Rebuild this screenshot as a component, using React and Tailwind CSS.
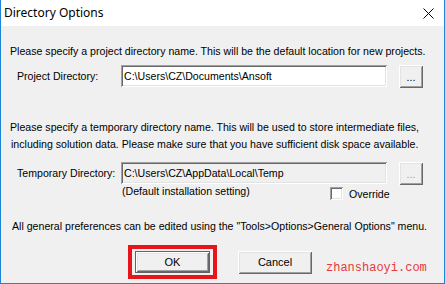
import React from 'react';

// classic win32 3D bevels
const raised = 'shadow-[inset_1px_1px_0_#ffffff,inset_-1px_-1px_0_#696969,inset_2px_2px_0_#e3e3e3,inset_-2px_-2px_0_#a0a0a0]';
const sunken = 'shadow-[inset_1px_1px_0_#a0a0a0,inset_-1px_-1px_0_#ffffff,inset_2px_2px_0_#696969,inset_-2px_-2px_0_#e3e3e3]';

function CloseIcon() {
  return (
    <svg width="11" height="11" viewBox="0 0 11 11" fill="none" stroke="#000" strokeWidth="1">
      <path d="M0.5 0.5 L10.5 10.5 M10.5 0.5 L0.5 10.5" />
    </svg>
  );
}

export default function App() {
  return (
    <div
      className="relative w-[445px] h-[284px] flex flex-col border-x border-b border-[#1c84d9] bg-[#f0f0f0] text-black overflow-hidden"
      style={{ fontFamily: '"Liberation Sans", Arial, sans-serif' }}
    >
      {/* title bar */}
      <div className="h-[26px] shrink-0 bg-white flex items-center justify-between pl-[3px] pr-[10px]">
        <span className="text-[12px] leading-[16px]" style={{ fontFamily: '"Noto Sans", sans-serif' }}>
          Directory Options
        </span>
        <CloseIcon />
      </div>

      <div className="flex flex-col text-[10.6px] whitespace-nowrap">
        <p className="mt-[18px] ml-[9px] leading-[14px]">
          Please specify a project directory name. This will be the default location for new projects.
        </p>

        <div className="mt-[7px] flex items-start">
          <span className="shrink-0 w-[120px] pl-[16px] leading-[22px]">Project Directory:</span>
          <div className={`shrink-0 w-[266px] h-[22px] bg-white ${sunken} pl-[3px] leading-[22px]`}>
            C:\Users\CZ\Documents\Ansoft
          </div>
          <button className={`shrink-0 ml-[12px] w-[24px] h-[23px] bg-[#f0f0f0] ${raised} leading-[20px]`}>...</button>
        </div>

        <p className="mt-[31px] ml-[9px] leading-[17px]">
          Please specify a temporary directory name. This will be used to store intermediate files,
          <br />
          <span className="ml-[1px]">including solution data. Please make sure that you have sufficient disk space available.</span>
        </p>

        <div className="mt-[9px] flex items-start">
          <span className="shrink-0 w-[120px] pl-[16px] leading-[22px]">Temporary Directory:</span>
          <div className={`shrink-0 w-[266px] h-[22px] bg-[#f0f0f0] ${sunken} pl-[3px] leading-[22px]`}>
            C:\Users\CZ\AppData\Local\Temp
          </div>
          <button className={`shrink-0 ml-[12px] w-[24px] h-[23px] bg-[#f0f0f0] ${raised} leading-[20px] text-[#a0a0a0]`}>
            ...
          </button>
        </div>

        <div className="flex items-start">
          <span className="shrink-0 ml-[121px] w-[208px] leading-[13px]">(Default installation setting)</span>
          <span className={`shrink-0 mt-[2px] w-[13px] h-[13px] bg-white ${sunken}`} />
          <span className="ml-[6px] mt-[2px] leading-[14px]">Override</span>
        </div>

        <p className="mt-[18px] ml-[11px] leading-[14px]">
          All general preferences can be edited using the "Tools&gt;Options&gt;General Options" menu.
        </p>

        <div className="mt-[12px] flex items-center">
          <div className="shrink-0 ml-[127px] border-[4px] border-[#e8141c] px-[3px] py-[2px]">
            <button className={`block w-[75px] h-[22px] border border-[#646464] bg-[#f0f0f0] ${raised} leading-[18px] text-[11px]`}>
              OK
            </button>
          </div>
          <button className={`shrink-0 ml-[21px] w-[74px] h-[23px] bg-[#f0f0f0] ${raised} leading-[21px] text-[11px]`}>Cancel</button>
        </div>
      </div>

      {/* watermark */}
      <span
        className="absolute left-[325px] top-[260px] text-[12px] leading-[16px] text-[#e5383d]"
        style={{ fontFamily: '"Liberation Mono", "Courier New", monospace' }}
      >
        zhanshaoyi.com
      </span>
    </div>
  );
}
